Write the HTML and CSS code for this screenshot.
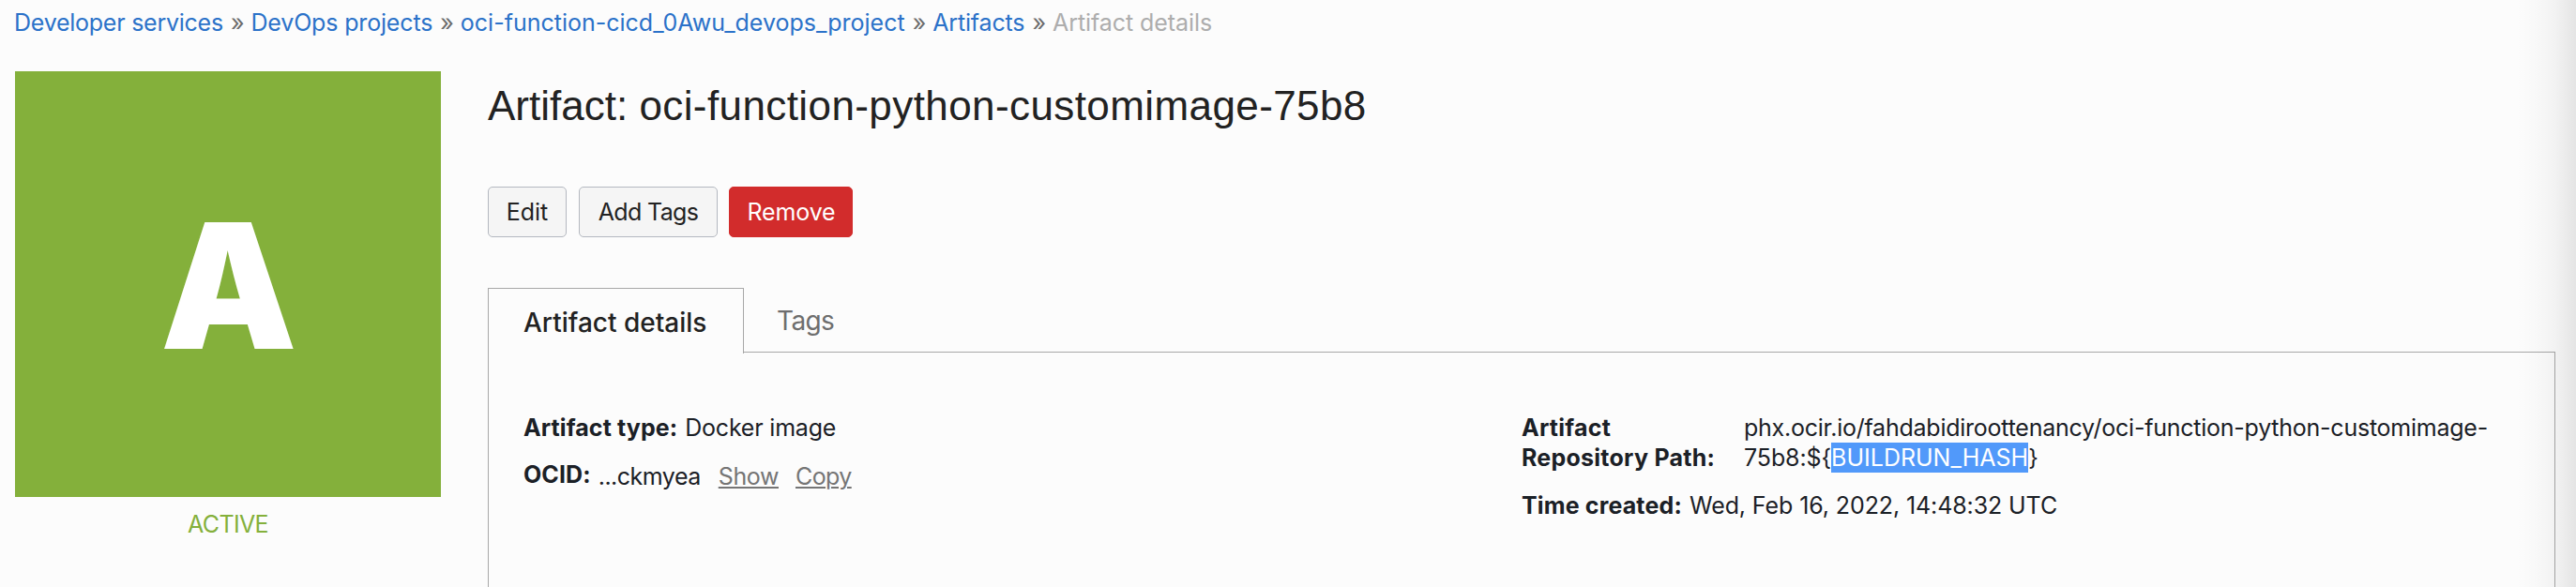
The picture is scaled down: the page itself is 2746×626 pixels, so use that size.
FILE: index.html
```
<!DOCTYPE html>
<html lang="en">
<head>
<meta charset="utf-8">
<title>Artifact details</title>
<link rel="stylesheet" href="styles.css">
</head>
<body>
<nav class="breadcrumb">
  <a class="crumb crumb-services">Developer services</a><span class="sep">»</span>
  <a class="crumb crumb-tight">DevOps projects</a><span class="sep">»</span>
  <a class="crumb">oci-function-cicd_0Awu_devops_project</a><span class="sep">»</span>
  <a class="crumb crumb-tight">Artifacts</a><span class="sep">»</span>
  <span class="crumb-current">Artifact details</span>
</nav>
<div class="layout">
  <aside class="side">
    <div class="tile"><span class="tile-letter">A</span></div>
    <div class="status">ACTIVE</div>
  </aside>
  <main class="main">
    <h1 class="title">Artifact: <span class="title-name">oci-function-python-customimage-75b8</span></h1>
    <div class="actions">
      <button class="btn btn-edit">Edit</button>
      <button class="btn btn-tags">Add Tags</button>
      <button class="btn btn-remove">Remove</button>
    </div>
    <div class="tabs">
      <div class="tab tab-active">Artifact details</div>
      <div class="tab tab-idle">Tags</div>
    </div>
    <section class="panel">
      <div class="col col-left">
        <div class="row"><b class="label">Artifact type:</b><span class="value docker">Docker image</span></div>
        <div class="row"><b class="label">OCID:</b><span class="ocid">...ckmyea</span><a class="action show">Show</a><a class="action copy">Copy</a></div>
      </div>
      <div class="col col-right">
        <div class="row path-row">
          <b class="label path-label">Artifact<br>Repository Path:</b>
          <span class="value path"><span class="path-image">phx.ocir.io/fahdabidiroottenancy/oci-function-python-customimage-</span><br><span class="path-prefix">75b8:${</span><mark class="selected">BUILDRUN_HASH</mark>}</span>
        </div>
        <div class="row"><b class="label time-label">Time created:</b><span class="value date">Wed, Feb 16, 2022, 14:48:32 UTC</span></div>
      </div>
    </section>
  </main>
</div>
<div class="edge-shadow"></div>
</body>
</html>
```
FILE: styles.css
```
* { box-sizing: border-box; }
body {
  position: relative;
  margin: 0;
  width: 2746px;
  height: 626px;
  overflow: hidden;
  padding-top: 8px;
  background: #fcfcfc;
  color: #1b2026;
  font: 25px/32px Inter, "Open Sans", sans-serif;
}
.breadcrumb { display: flex; height: 32px; padding-left: 15px; white-space: nowrap; }
.crumb { color: #2b72c9; }
.crumb-services { letter-spacing: -0.25px; }
.crumb-tight { letter-spacing: -0.16px; }
.crumb-current { color: #adadad; letter-spacing: -0.06px; }
.sep { margin: 0 7px 0 8px; color: #6b6b6b; }

.layout { display: flex; gap: 50px; padding: 36px 22px 0 16px; }
.side { flex: none; width: 454px; }
.tile {
  display: flex;
  justify-content: center;
  height: 454px;
  padding-left: 1px;
  background: #84b03b;
  color: #fff;
}
.tile-letter { font-size: 186px; font-weight: 900; line-height: 458px; transform: scaleX(.985); }
.status { padding-top: 13px; color: #84b03b; letter-spacing: -0.65px; text-align: center; }

.main { flex: 1; padding-top: 11px; }
.title {
  margin: 0 0 60px;
  color: #222;
  font: 400 44px/52px "Liberation Sans", Arial, sans-serif;
}
.title-name { letter-spacing: 0.41px; }

.actions { display: flex; height: 54px; }
.btn {
  height: 54px;
  padding: 0 0 1px;
  border: 1px solid #b4b8c0;
  border-radius: 5px;
  background: #f5f5f5;
  color: #222;
  font: inherit;
}
.btn-edit { width: 84px; margin-right: 13px; }
.btn-tags { width: 148px; margin-right: 12px; letter-spacing: -0.65px; }
.btn-remove { width: 132px; padding-left: 1px; border-color: #d22c2c; background: #d22c2c; color: #fff; letter-spacing: -0.15px; }

.tabs { display: flex; height: 68px; margin-top: 54px; }
.tab { font-size: 28px; }
.tab-active {
  position: relative;
  flex: none;
  width: 273px;
  height: 70px;
  padding: 20px 0 0 37px;
  border: 1px solid #a8a8a8;
  border-bottom: 0;
  background: #fcfcfc;
  color: #222;
  font-weight: 500;
}
.tab-idle { padding: 19px 0 0 35px; color: #6e6e6e; letter-spacing: -0.6px; }

.panel {
  display: flex;
  height: 260px;
  padding: 64px 0 0 37px;
  border: 1px solid #a8a8a8;
  border-bottom: 0;
}
.col { display: flex; flex-direction: column; white-space: nowrap; }
.col-left { flex: none; width: 1064px; gap: 18px; }
.col-right { gap: 19px; }
.row { display: flex; }
.label { margin-right: 8px; font-weight: 700; letter-spacing: 0.1px; }
.path-label { width: 229px; letter-spacing: 0.25px; }
.time-label { letter-spacing: 0.15px; }
.docker { letter-spacing: -0.2px; }
.date { letter-spacing: -0.1px; }
.path-image { letter-spacing: -0.24px; }
.path-prefix { letter-spacing: -0.1px; }
.selected { display: inline-block; height: 32px; background: #5199fa; color: #fff; }
.ocid, .action { padding-top: 2px; }
.ocid { letter-spacing: -0.5px; }
.action {
  margin-left: 19px;
  color: #757575;
  text-decoration: underline;
  text-decoration-thickness: 2px;
  text-underline-offset: 2px;
}
.show { letter-spacing: -0.4px; }
.copy { margin-left: 18px; letter-spacing: -0.6px; }

.edge-shadow {
  position: absolute;
  top: 0;
  right: 0;
  width: 64px;
  height: 626px;
  background: linear-gradient(to right, rgba(0,0,0,0), rgba(0,0,0,.015) 35%, rgba(0,0,0,.04) 65%, rgba(0,0,0,.095));
}
```
